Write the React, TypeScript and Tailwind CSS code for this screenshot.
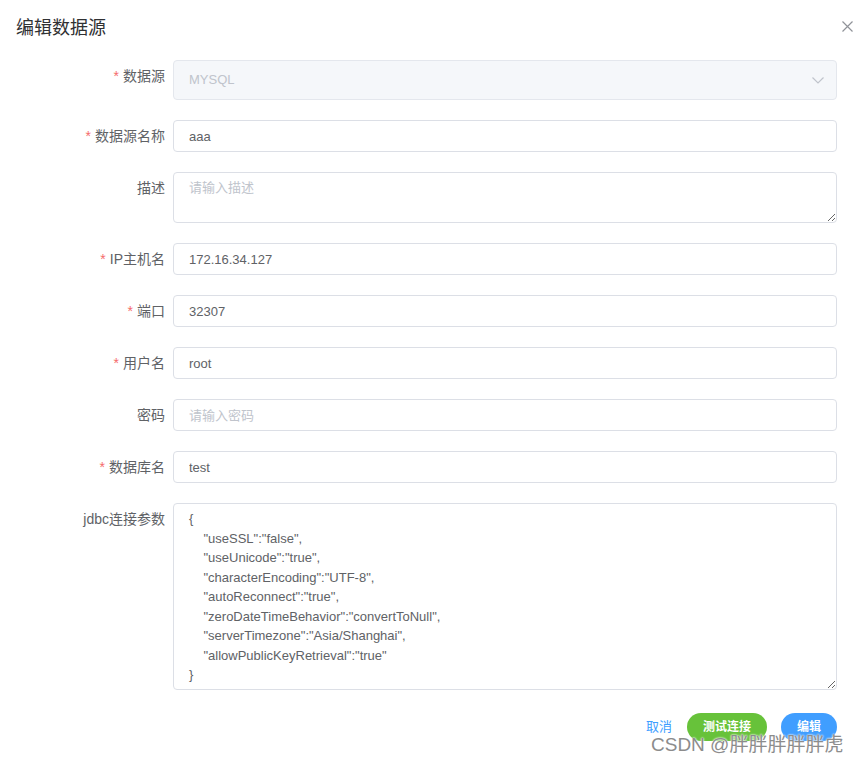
import React from 'react';

const font = 'font-["Liberation_Sans","Noto_Sans_CJK_SC",sans-serif]';

const jdbc = `{
    "useSSL":"false",
    "useUnicode":"true",
    "characterEncoding":"UTF-8",
    "autoReconnect":"true",
    "zeroDateTimeBehavior":"convertToNull",
    "serverTimezone":"Asia/Shanghai",
    "allowPublicKeyRetrieval":"true"
}`;

const Label = ({ text, required }: { text: string; required?: boolean }) => (
  <label className="w-[153px] shrink-0 pr-[8px] text-right text-[14px] leading-[32px] text-[#606266]">
    {required && <span className="mr-[4px] text-[#f56c6c]">*</span>}
    {text}
  </label>
);

const Row = ({ children }: { children: React.ReactNode }) => (
  <div className="mb-[20px] flex items-start">{children}</div>
);

const inputCls =
  'h-[32px] w-full rounded-[4px] border border-[#dcdfe6] bg-white px-[15px] text-[13px] text-[#606266] outline-none placeholder:text-[#c0c4cc]';

const App: React.FC = () => {
  return (
    <div className={`relative h-[764px] w-[857px] overflow-hidden bg-white ${font}`}>
      <div className="relative h-[60px] pl-[16px] pt-[16px]">
        <span className="text-[18px] leading-[24px] text-[#303133]">编辑数据源</span>
        <button className="absolute right-[4px] top-[21px] h-[11px] w-[11px] text-[#909399]">
          <svg viewBox="0 0 11 11" width="11" height="11" fill="none" stroke="currentColor" strokeWidth="1.2">
            <path d="M0.5 0.5 L10.5 10.5 M10.5 0.5 L0.5 10.5" />
          </svg>
        </button>
      </div>

      <div className="pl-[20px] pr-[20px]">
        <Row>
          <Label text="数据源" required />
          <div className="flex h-[40px] flex-1 items-center justify-between rounded-[4px] border border-[#e4e7ed] bg-[#f5f7fa] pl-[15px] pr-[12px] text-[13px] text-[#c0c4cc]">
            <span>MYSQL</span>
            <svg viewBox="0 0 12 7" width="12" height="7" fill="none" stroke="#c0c4cc" strokeWidth="1.2">
              <path d="M0.5 0.5 L6 6 L11.5 0.5" />
            </svg>
          </div>
        </Row>
        <Row>
          <Label text="数据源名称" required />
          <input className={inputCls} defaultValue="aaa" />
        </Row>
        <Row>
          <Label text="描述" />
          <textarea
            className="block h-[51px] w-full rounded-[4px] border border-[#dcdfe6] px-[15px] py-[5px] text-[13px] leading-[1.5] text-[#606266] outline-none placeholder:text-[#c0c4cc]"
            placeholder="请输入描述"
          />
        </Row>
        <Row>
          <Label text="IP主机名" required />
          <input className={inputCls} defaultValue="172.16.34.127" />
        </Row>
        <Row>
          <Label text="端口" required />
          <input className={inputCls} defaultValue="32307" />
        </Row>
        <Row>
          <Label text="用户名" required />
          <input className={inputCls} defaultValue="root" />
        </Row>
        <Row>
          <Label text="密码" />
          <input className={inputCls} placeholder="请输入密码" />
        </Row>
        <Row>
          <Label text="数据库名" required />
          <input className={inputCls} defaultValue="test" />
        </Row>
        <Row>
          <Label text="jdbc连接参数" />
          <textarea
            className="block h-[187px] w-full rounded-[4px] border border-[#dcdfe6] px-[15px] py-[5px] text-[13px] leading-[1.5] text-[#606266] outline-none"
            defaultValue={jdbc}
          />
        </Row>

        <div className="flex items-center justify-end pt-[3px]">
          <button className="mr-[15px] text-[13px] text-[#409eff]">取消</button>
          <button className="h-[28px] rounded-full bg-[#67c23a] px-[16px] text-[12px] font-bold text-white">测试连接</button>
          <button className="ml-[14px] h-[28px] rounded-full bg-[#409eff] px-[16px] text-[12px] font-bold text-white">编辑</button>
        </div>
      </div>

      <div className="pointer-events-none absolute left-[651px] top-[733px] text-[19px] leading-[24px] text-[#8c8c8c] [text-shadow:0_0_2px_#fff,0_0_2px_#fff]">
        CSDN @胖胖胖胖胖虎
      </div>
    </div>
  );
};

export default App;
